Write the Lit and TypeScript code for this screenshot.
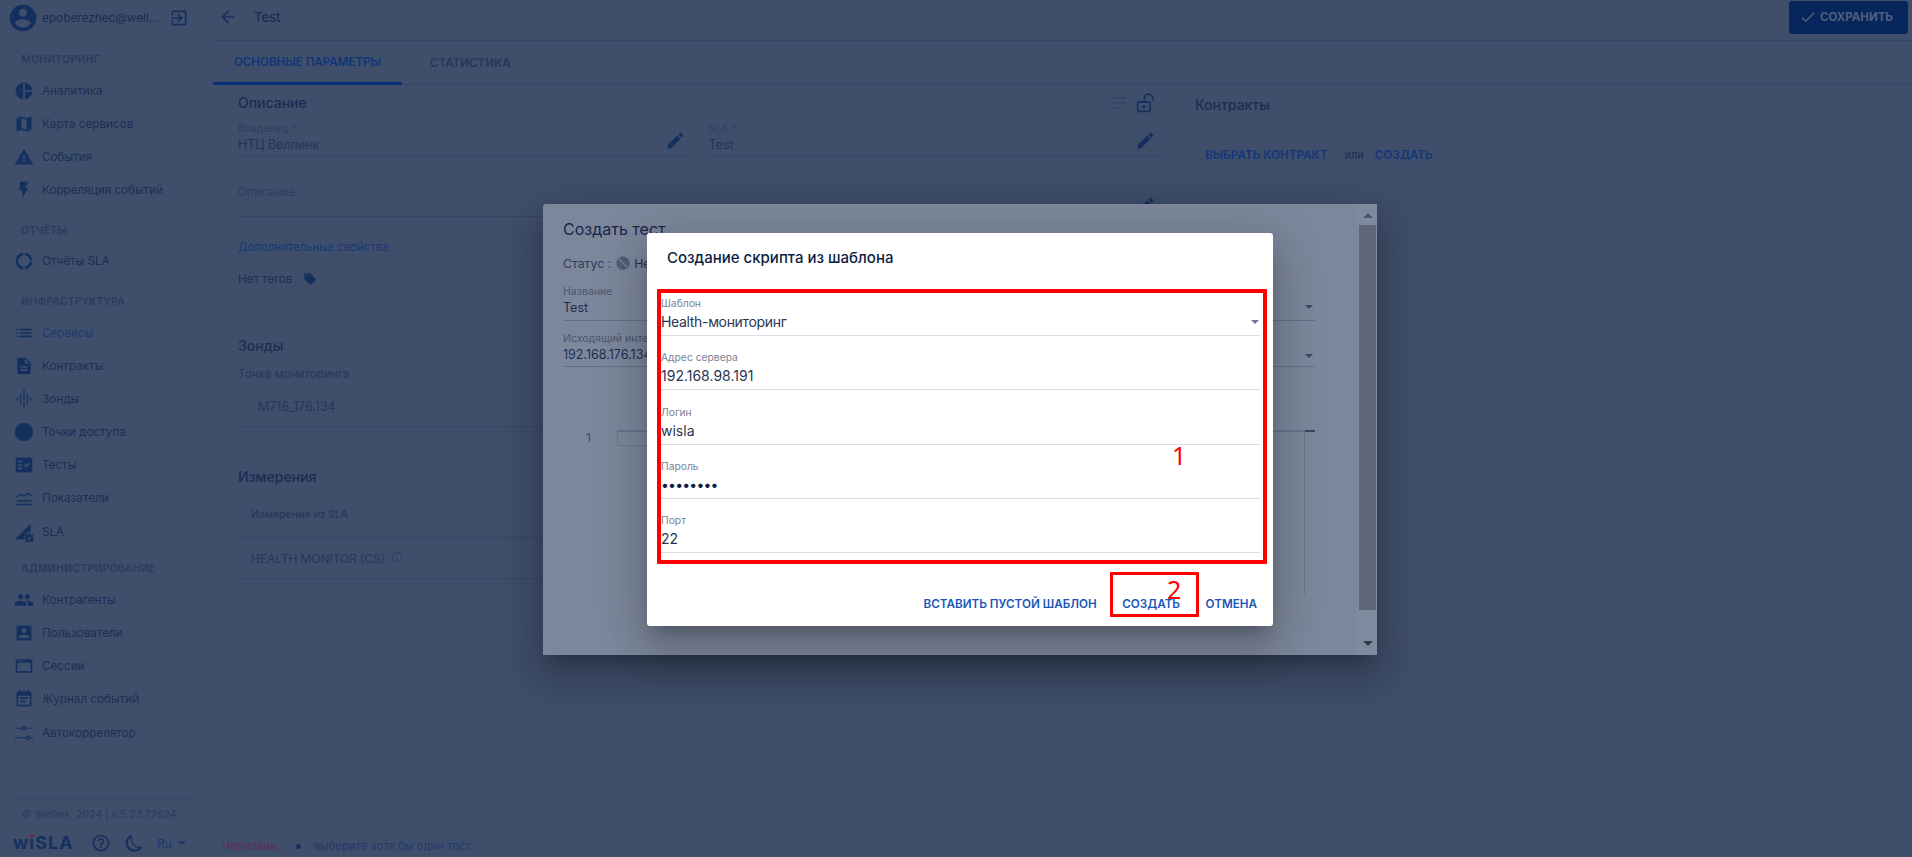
import { LitElement, html, css, svg } from "lit";
import { customElement } from "lit/decorators.js";

const P: Record<string, string> = {
  account: "M12 2C6.48 2 2 6.48 2 12s4.48 10 10 10 10-4.48 10-10S17.52 2 12 2zm0 3c1.66 0 3 1.34 3 3s-1.34 3-3 3-3-1.34-3-3 1.34-3 3-3zm0 14.2c-2.5 0-4.71-1.28-6-3.22.03-1.99 4-3.08 6-3.08 1.99 0 5.97 1.09 6 3.08-1.29 1.94-3.5 3.22-6 3.22z",
  exit: "M10.09 15.59L11.5 17l5-5-5-5-1.41 1.41L12.67 11H3v2h9.67l-2.58 2.59zM19 3H5c-1.11 0-2 .9-2 2v4h2V5h14v14H5v-4H3v4c0 1.1.89 2 2 2h14c1.1 0 2-.9 2-2V5c0-1.1-.9-2-2-2z",
  pie: "M11 2v20c-5.07-.5-9-4.79-9-10s3.93-9.5 9-10zm2.03 0v8.99H22c-.47-4.74-4.24-8.52-8.97-8.99zm0 11.01V22c4.74-.47 8.5-4.25 8.97-8.99h-8.97z",
  map: "M20.5 3l-.16.03L15 5.1 9 3 3.36 4.9c-.21.07-.36.25-.36.48V20.5c0 .28.22.5.5.5l.16-.03L9 18.9l6 2.1 5.64-1.9c.21-.07.36-.25.36-.48V3.5c0-.28-.22-.5-.5-.5zM15 19l-6-2.11V5l6 2.11V19z",
  warning: "M1 21h22L12 2 1 21zm12-3h-2v-2h2v2zm0-4h-2v-4h2v4z",
  flash: "M7 2v11h3v9l7-12h-4l4-8z",
  donut: "M11 5.08V2c-5 .5-9 4.81-9 10s4 9.5 9 10v-3.08c-3-.48-6-3.49-6-6.92s3-6.44 6-6.92zM18.97 11H22c-.47-5-4-8.53-9-9v3.08C16 5.51 18.54 8 18.97 11zM13 18.92V22c5-.47 8.53-4 9-9h-3.03c-.43 3-2.97 5.49-5.97 5.92z",
  list: "M3 13h2v-2H3v2zm0 4h2v-2H3v2zm0-8h2V7H3v2zm4 4h14v-2H7v2zm0 4h14v-2H7v2zM7 7v2h14V7H7z",
  doc: "M14 2H6c-1.1 0-1.99.9-1.99 2L4 20c0 1.1.89 2 1.99 2H18c1.1 0 2-.9 2-2V8l-6-6zm2 16H8v-2h8v2zm0-4H8v-2h8v2zm-3-5V3.5L18.5 9H13z",
  eq: "M11.3 1h1.4v22h-1.4zM7.3 5h1.4v14H7.3zM15.3 5h1.4v14h-1.4zM3.3 10h1.4v4H3.3zM19.3 10h1.4v4h-1.4z",
  dot: "M12 1a11 11 0 1 0 0 22 11 11 0 0 0 0-22z",
  check: "M20 3H4c-1.1 0-2 .9-2 2v14c0 1.1.9 2 2 2h16c1.1 0 2-.9 2-2V5c0-1.1-.9-2-2-2zM10 17H5v-2h5v2zm0-4H5v-2h5v2zm0-4H5V7h5v2zm4.82 6L12 12.16l1.41-1.41 1.41 1.42L17.99 9l1.42 1.42L14.82 15z",
  metrics: "M3 19h18v1.6H3zM3 14.5h18v1.6H3zM3 10.5l5-4 4 2.4 5-3.4 4 2.4v1.9l-4-2.4-5 3.4-4-2.4-5 4z",
  sla: "M1 21L20 2v10.2a6 6 0 0 0-6.6 8.8zM19 13.5l.4 1.6 1.3.5 1.4-.8 1 1-.8 1.4.5 1.3 1.6.4v1.4l-1.6.4-.5 1.3.8 1.4-1 1-1.4-.8-1.3.5-.4 1.6h-1.4l-.4-1.6-1.3-.5-1.4.8-1-1 .8-1.4-.5-1.3-1.6-.4v-1.4l1.6-.4.5-1.3-.8-1.4 1-1 1.4.8 1.3-.5.4-1.6zM18.3 18a1.7 1.7 0 1 0 0 3.4 1.7 1.7 0 0 0 0-3.4z",
  people: "M16 11c1.66 0 2.99-1.34 2.99-3S17.66 5 16 5c-1.66 0-3 1.34-3 3s1.34 3 3 3zm-8 0c1.66 0 2.99-1.34 2.99-3S9.66 5 8 5C6.34 5 5 6.34 5 8s1.34 3 3 3zm0 2c-2.33 0-7 1.17-7 3.5V19h14v-2.5c0-2.33-4.67-3.5-7-3.5zm8 0c-.29 0-.62.02-.97.05 1.16.84 1.97 1.97 1.97 3.45V19h6v-2.5c0-2.33-4.67-3.5-7-3.5z",
  box: "M3 5v14c0 1.1.89 2 2 2h14c1.1 0 2-.9 2-2V5c0-1.1-.9-2-2-2H5c-1.11 0-2 .9-2 2zm12 4c0 1.66-1.34 3-3 3s-3-1.34-3-3 1.34-3 3-3 3 1.34 3 3zm-9 8c0-2 4-3.1 6-3.1s6 1.1 6 3.1v1H6v-1z",
  web: "M20 4H4c-1.11 0-2 .9-2 2v12c0 1.1.89 2 2 2h16c1.1 0 2-.9 2-2V6c0-1.1-.89-2-2-2zm0 14H4V8h16v10zM4.5 5.2h1.2v1.2H4.5zM7 5.2h1.2v1.2H7zM9.5 5.2h1.2v1.2H9.5z",
  note: "M17 10H7v2h10v-2zm2-7h-1V1h-2v2H8V1H6v2H5c-1.11 0-1.99.9-1.99 2L3 19c0 1.1.89 2 2 2h14c1.1 0 2-.9 2-2V5c0-1.1-.9-2-2-2zm0 16H5V8h14v11zm-5-5H7v2h7v-2z",
  tune: "M1 7h8.2a3 3 0 0 0 5.6 0H23V5.6h-8.2a3 3 0 0 0-5.6 0H1zM12 5a1.3 1.3 0 1 1 0 2.6A1.3 1.3 0 0 1 12 5zM1 18.4h13.2a3 3 0 0 0 5.6 0H23V17h-3.2a3 3 0 0 0-5.6 0H1zM17 16.4a1.3 1.3 0 1 1 0 2.6 1.3 1.3 0 0 1 0-2.6z",
  help: "M11 18h2v-2h-2v2zm1-16C6.48 2 2 6.48 2 12s4.48 10 10 10 10-4.48 10-10S17.52 2 12 2zm0 18c-4.41 0-8-3.59-8-8s3.59-8 8-8 8 3.59 8 8-3.59 8-8 8zm0-14c-2.21 0-4 1.79-4 4h2c0-1.1.9-2 2-2s2 .9 2 2c0 2-3 1.75-3 5h2c0-2.25 3-2.5 3-5 0-2.21-1.79-4-4-4z",
  moon: "M9.5 2A10.5 10.5 0 1 0 22 16.3a12 12 0 0 1-3 .4C12.8 16.7 8.4 11.6 9.5 2zM7.6 5a14 14 0 0 0 10 13.7A8.5 8.5 0 0 1 7.6 5z",
  edit: "M3 17.25V21h3.75L17.81 9.94l-3.75-3.75L3 17.25zM20.71 7.04c.39-.39.39-1.02 0-1.41l-2.34-2.34c-.39-.39-1.02-.39-1.41 0l-1.83 1.83 3.75 3.75 1.83-1.83z",
  back: "M20 11H7.83l5.59-5.59L12 4l-8 8 8 8 1.41-1.41L7.83 13H20v-2z",
  tick: "M9 16.17L4.83 12l-1.42 1.41L9 19 21 7l-1.41-1.41z",
  tag: "M21.41 11.58l-9-9C12.05 2.22 11.55 2 11 2H4c-1.1 0-2 .9-2 2v7c0 .55.22 1.05.59 1.42l9 9c.36.36.86.58 1.41.58.55 0 1.05-.22 1.41-.59l7-7c.37-.36.59-.86.59-1.41 0-.55-.23-1.06-.59-1.42zM5.5 7C4.67 7 4 6.33 4 5.5S4.67 4 5.5 4 7 4.67 7 5.5 6.33 7 5.5 7z",
  lock: "M3 10h13a2 2 0 0 1 2 2v9a2 2 0 0 1-2 2H3a2 2 0 0 1-2-2v-9a2 2 0 0 1 2-2zm0 2v9h13v-9zm6.5 2.5a2 2 0 1 1 0 4 2 2 0 0 1 0-4zM9 10V6.5a6 6 0 0 1 12 0V9h-2V6.5a4 4 0 0 0-8 0V10z",
  sort: "M2 5h20v1.3H2zM2 11.3h20v1.3H2zM2 17.6h13v1.3H2z",
  info: "M11.3 7h1.4v1.4h-1.4zM11.3 10h1.4v7h-1.4zM12 2a10 10 0 1 0 0 20 10 10 0 0 0 0-20zm0 18.7a8.7 8.7 0 1 1 0-17.4 8.7 8.7 0 0 1 0 17.4z",
  offline: "M12 2a10 10 0 1 0 0 20 10 10 0 0 0 0-20zM3.5 5l1.3-1.3 15.5 15.5L19 20.5z",
};

const icon = (n: string, size = 24) => html`<svg class="ico" width=${size} height=${size} viewBox="0 0 24 24" fill="currentColor">${svg`<path fill-rule="evenodd" d=${P[n]}></path>`}</svg>`;

const NAV = [
  { title: "МОНИТОРИНГ", cls: "", items: [["pie", "Аналитика"], ["map", "Карта сервисов"], ["warning", "События"], ["flash", "Корреляция событий"]] },
  { title: "ОТЧЁТЫ", cls: "", items: [["donut", "Отчёты SLA"]] },
  { title: "ИНФРАСТРУКТУРА", cls: "", items: [["list", "Сервисы"], ["doc", "Контракты"], ["eq", "Зонды"], ["dot", "Точки доступа"], ["check", "Тесты"], ["metrics", "Показатели"], ["sla", "SLA"]] },
  { title: "АДМИНИСТРИРОВАНИЕ", cls: "tight", items: [["people", "Контрагенты"], ["box", "Пользователи"], ["web", "Сессии"], ["note", "Журнал событий"], ["tune", "Автокоррелятор"]] },
];

const TPL = [
  ["Шаблон", "Health-мониторинг", "select"],
  ["Адрес сервера", "192.168.98.191", ""],
  ["Логин", "wisla", ""],
  ["Пароль", "••••••••", "pw"],
  ["Порт", "22", ""],
];

@customElement("app-root")
export class AppRoot extends LitElement {
  static styles = css`
    :host { display: block; position: relative; width: 1912px; height: 857px; overflow: hidden; background: #3f4e6a; font-family: Inter, "Noto Sans", sans-serif; color: #1e2f55; }
    * { box-sizing: border-box; }
    .ico { display: block; flex: none; }
    .app { display: grid; grid-template-columns: 213px 1fr; height: 857px; }

    .side { display: flex; flex-direction: column; height: 857px; }
    .profile { height: 45px; display: flex; align-items: center; padding: 0 0 10px 7px; font-size: 11.8px; color: #1a2d54; }
    .profile .av { color: #14305f; margin-right: 3px; }
    .profile .mail { width: 127px; white-space: nowrap; }
    .profile .out { color: #14305f; }
    .group { margin-bottom: 9px; }
    .group.tight { margin-top: -2px; }
    .group.tight h4 { height: 28px; line-height: 28px; }
    .group h4 { margin: 0; height: 29px; line-height: 29px; padding-left: 21px; font-size: 10.5px; font-weight: 600; color: #2a3b60; letter-spacing: 0.2px; }
    .item { height: 33.2px; display: flex; align-items: center; padding-left: 14px; font-size: 11.7px; color: #1e2f55; }
    .item .ico { color: #14305f; margin-right: 8px; }
    .item.sub { color: #1d3a70; }
    .foot { margin-top: auto; }
    .copy { margin: 0 15px 0 13px; border-top: 1px solid #374664; height: 31px; padding: 9px 0 0 9px; font-size: 10.5px; color: #2a3b5f; white-space: nowrap; }
    .brand { height: 28px; display: flex; align-items: center; padding: 0 0 0 13px; color: #15305f; }
    .logo { position: relative; width: 60px; font-size: 18px; font-weight: 700; letter-spacing: 1px; line-height: 24px; color: #14305f; }
    .logo i { position: absolute; left: 17px; top: 3px; width: 3.5px; height: 3.5px; border-radius: 50%; background: #6a2a4c; }
    .brand .q { margin-left: 18px; }
    .brand .m { margin-left: 13px; }
    .brand .ru { margin-left: 13px; font-size: 12px; color: #1d3a70; }
    .caret { width: 0; height: 0; border-left: 5px solid transparent; border-right: 5px solid transparent; border-top: 5px solid currentColor; }
    .brand .caret { margin-left: 6px; border-width: 4px 4px 0; color: #1d3a70; }

    .main { display: flex; flex-direction: column; min-width: 0; }
    .top { height: 41px; border-bottom: 1px solid #374664; display: flex; align-items: center; padding: 0 4px 6px 5px; }
    .top .ar { color: #1a3060; margin-right: 16px; }
    .top b { font-size: 13px; font-weight: 500; color: #1a2d54; }
    .save { margin-left: auto; height: 33px; width: 119px; border-radius: 3px; background: #07265c; color: #4f5f7e; display: flex; align-items: center; padding-left: 10px; gap: 3px; font-size: 11.5px; font-weight: 700; }
    .tabs { height: 44px; border-bottom: 1px solid #374664; display: flex; font-size: 11.6px; font-weight: 600; }
    .tab { display: flex; align-items: center; justify-content: center; height: 44px; color: #25375d; }
    .tab.on { width: 189px; color: #10367a; border-bottom: 3px solid #0a3078; padding-top: 1px; }
    .tab.off { margin-left: 28px; }
    .body { display: grid; grid-template-columns: 923px 1fr; padding-left: 25px; column-gap: 34px; }
    .titlebar { height: 35px; display: flex; align-items: center; justify-content: space-between; font-size: 14px; font-weight: 500; color: #1a2d54; }
    .titlebar .acts { display: flex; align-items: center; gap: 8.5px; padding-right: 5px; }
    .titlebar .acts .s { color: #2e3f60; }
    .titlebar .acts .l { color: #14305f; }
    .cols { display: grid; grid-template-columns: 1fr 1fr; column-gap: 18px; }
    .f { position: relative; border-bottom: 1px solid #374664; height: 37px; }
    .f label { display: block; font-size: 10.5px; line-height: 14px; padding-top: 2px; height: 16px; color: #2f3e5f; }
    .f div { font-size: 12.5px; line-height: 17px; color: #24345a; }
    .f .ico { position: absolute; right: 5px; top: 10px; color: #14305f; }
    .f.desc { height: 60px; padding-top: 28px; font-size: 11.8px; color: #2f3e5f; margin-bottom: 21px; }
    .f.desc .ico { top: 38px; }
    .link { font-size: 11.4px; color: #163a78; line-height: 18px; }
    .tags { margin-top: 14px; height: 18px; display: flex; align-items: center; font-size: 11.6px; color: #1f3055; }
    .tags .ico { margin-left: 11px; color: #14305f; }
    .h2 { font-size: 14px; font-weight: 500; color: #1a2d54; }
    .probes { margin-top: 49px; line-height: 18px; }
    .mp { margin-top: 10px; font-size: 11.7px; line-height: 18px; color: #26375c; }
    .point { margin-top: 15px; height: 29px; padding: 0 0 0 20px; font-size: 12.5px; line-height: 18px; color: #26375c; border-bottom: 1px solid #374664; }
    .meas { margin-top: 40px; line-height: 20px; }
    .th { margin-top: 21px; height: 30px; padding-left: 13px; font-size: 10.5px; font-weight: 600; color: #2a3a5e; border-bottom: 1px solid #374664; }
    .td { height: 41px; padding: 13px 0 0 13px; display: flex; align-items: flex-start; gap: 6px; font-size: 11.9px; color: #25375c; border-bottom: 1px solid #374664; }
    .td .ico { color: #2a3a60; }
    .right .titlebar { height: 39px; }
    .right .row { display: flex; align-items: center; margin-top: 24px; padding-left: 10px; font-size: 11.7px; font-weight: 600; color: #14377a; }
    .right .or { margin: 0 11px 0 17px; font-weight: 400; font-size: 11px; color: #1a2d54; }
    .draft { margin-top: auto; height: 30px; border-top: 1px solid #3a4966; padding: 9px 0 0 9px; display: flex; align-items: flex-start; font-size: 11.4px; color: #233a6a; line-height: 18px; }
    .draft em { font-style: normal; color: #5e2f55; }
    .draft .b { width: 5px; height: 5px; border-radius: 50%; background: #15305f; margin: 7px 13px 0 16px; }

    .d1 { position: absolute; left: 543px; top: 204px; width: 834px; height: 451px; background: #7c879b; border-radius: 3px 0 0 0; display: flex; box-shadow: 0 11px 15px -7px rgba(0,0,0,.2), 0 24px 38px 3px rgba(0,0,0,.14), 0 9px 46px 8px rgba(0,0,0,.12); }
    .d1 .c { flex: 1; padding: 0 0 0 20px; color: #1c2d4f; min-width: 0; }
    .d1 h3 { margin: 0; font-size: 16px; font-weight: 400; line-height: 20px; padding-top: 15px; height: 46px; color: #16274a; }
    .st { display: flex; align-items: center; height: 18px; margin-top: 4px; font-size: 12.3px; color: #2d3c5b; }
    .st .ico { margin: 0 3px 0 4px; color: #515d74; }
    .st span:last-child { color: #3a2a4a; }
    .dcols { display: grid; grid-template-columns: 370px 365px; column-gap: 17px; row-gap: 11px; margin-top: 13px; }
    .df { height: 35.5px; border-bottom: 1px solid #657087; position: relative; font-size: 12.5px; line-height: 17px; color: #202f4f; }
    .df label { display: block; font-size: 10.5px; line-height: 14px; height: 14px; color: #4a5670; white-space: nowrap; }
    .df .caret { position: absolute; right: 2px; top: 20px; border-width: 4px 4px 0; color: #3d4860; }
    .df:nth-child(4) .caret { top: 22px; }
    .editor { position: relative; margin-top: 63px; height: 164px; display: flex; }
    .editor .n { width: 54px; padding-left: 23px; font-size: 12px; color: #28597f; line-height: 15px; }
    .editor .b { width: 60px; height: 16px; border: 1px solid #6c778b; }
    .editor .hl { position: absolute; left: 54px; width: 687px; top: 0; height: 2px; background: #66748f; }
    .editor .v { position: absolute; left: 741px; top: 0; bottom: 0; width: 1px; background: #687387; }
    .editor .d { position: absolute; left: 742px; top: 0; width: 10px; height: 2px; background: #3a445a; }
    .sb { width: 20px; padding: 0 1px 0 2px; background: #7f8a9e; display: flex; flex-direction: column; align-items: center; }
    .sb .up, .sb .dn { width: 0; height: 0; border-left: 5px solid transparent; border-right: 5px solid transparent; }
    .sb .up { border-bottom: 5px solid #4e586c; margin: 9px 0 7px; }
    .sb .th2 { width: 17px; height: 385px; background: #5d6779; }
    .sb .dn { border-top: 5px solid #323b4d; margin-top: 31px; }

    .d2 { position: absolute; left: 647px; top: 233px; width: 626px; height: 393px; background: #fff; border-radius: 3px; display: flex; flex-direction: column; box-shadow: 0 11px 15px -7px rgba(0,0,0,.2), 0 24px 38px 3px rgba(0,0,0,.14), 0 9px 46px 8px rgba(0,0,0,.12); }
    .d2 h2 { margin: 0; height: 50px; padding: 15px 0 0 20px; font-size: 15px; font-weight: 500; line-height: 20px; color: #0c1e42; }
    .d2 .form { padding: 13px 13px 0 14px; }
    .tf { position: relative; height: 40px; border-bottom: 1px solid #dcdee3; margin-bottom: 14.3px; }
    .tf label { display: block; height: 16px; font-size: 10.3px; line-height: 14px; color: #7a849a; }
    .tf div { font-size: 14px; line-height: 20px; color: #2a3552; }
    .tf.select div { letter-spacing: -0.33px; }
    .tf.pw div { letter-spacing: -0.8px; color: #0c1e42; }
    .tf .caret { position: absolute; right: 1px; top: 24px; border-width: 4px 4px 0; color: #6c7690; }
    .acts2 { margin-top: auto; display: flex; justify-content: flex-end; gap: 9.5px; padding: 4px 8px; }
    .btn { height: 36px; padding: 0 8px; display: flex; align-items: center; font-size: 11.7px; font-weight: 600; color: #1a56b8; white-space: nowrap; }

    .mark { position: absolute; border: 4px solid #fe0000; border-radius: 1px; }
    .m1 { left: 657px; top: 289px; width: 610px; height: 275px; }
    .m2 { left: 1110px; top: 572px; width: 89px; height: 45px; border-width: 3.5px; }
    .num { position: absolute; color: #fe0000; font-family: "Noto Sans", sans-serif; font-size: 25px; line-height: 30px; }
    .n1 { left: 1172px; top: 440px; }
    .n2 { left: 1167px; top: 574px; }
  `;

  render() {
    return html`
      <div class="app">
        <aside class="side">
          <div class="profile">
            <span class="av">${icon("account", 32)}</span>
            <span class="mail">epoberezhec@well...</span>
            <span class="out">${icon("exit", 20)}</span>
          </div>
          ${NAV.map((g) => html`
            <section class="group ${g.cls}">
              <h4>${g.title}</h4>
              ${g.items.map(([i, t]) => html`<div class="item ${t === "Сервисы" ? "sub" : ""}">${icon(i, 20)}<span>${t}</span></div>`)}
            </section>`)}
          <div class="foot">
            <div class="copy">© Wellink, 2024 | v.5.2.1.72624</div>
            <div class="brand">
              <span class="logo">wıSLA<i></i></span>
              <span class="q">${icon("help", 20)}</span>
              <span class="m">${icon("moon", 20)}</span>
              <span class="ru">Ru</span><span class="caret"></span>
            </div>
          </div>
        </aside>

        <main class="main">
          <header class="top">
            <span class="ar">${icon("back", 20)}</span>
            <b>Test</b>
            <div class="save">${icon("tick", 18)}<span>СОХРАНИТЬ</span></div>
          </header>
          <nav class="tabs">
            <div class="tab on">ОСНОВНЫЕ ПАРАМЕТРЫ</div>
            <div class="tab off">СТАТИСТИКА</div>
          </nav>
          <div class="body">
            <div>
              <div class="titlebar">
                <span>Описание</span>
                <span class="acts"><span class="s">${icon("sort", 18)}</span><span class="l">${icon("lock", 20)}</span></span>
              </div>
              <div class="cols">
                <div class="f"><label>Владелец *</label><div>НТЦ Веллинк</div>${icon("edit", 21)}</div>
                <div class="f"><label>SLA *</label><div>Test</div>${icon("edit", 21)}</div>
              </div>
              <div class="f desc">Описание ${icon("edit", 21)}</div>
              <div class="link">Дополнительные свойства</div>
              <div class="tags">Нет тегов ${icon("tag", 14)}</div>
              <div class="h2 probes">Зонды</div>
              <div class="mp">Точка мониторинга</div>
              <div class="point">M716_176.134</div>
              <div class="h2 meas">Измерения</div>
              <div class="th">Измерение из SLA</div>
              <div class="td">HEALTH MONITOR (CS) ${icon("info", 12)}</div>
            </div>
            <div class="right">
              <div class="titlebar"><span>Контракты</span></div>
              <div class="row"><span>ВЫБРАТЬ КОНТРАКТ</span><span class="or">или</span><span>СОЗДАТЬ</span></div>
            </div>
          </div>
          <div class="draft"><em>Черновик:</em><span class="b"></span><span>выберите хотя бы один тест</span></div>
        </main>
      </div>

      <div class="d1">
        <div class="c">
          <h3>Создать тест</h3>
          <div class="st"><span>Статус :</span>${icon("offline", 16)}<span>Не активен</span></div>
          <div class="dcols">
            <div class="df"><label>Название</label>Test</div>
            <div class="df"><label>Тип</label><span class="caret"></span></div>
            <div class="df"><label>Исходящий интерфейс</label>192.168.176.134</div>
            <div class="df"><label>Адрес</label><span class="caret"></span></div>
          </div>
          <div class="editor">
            <div class="n">1</div><div class="b"></div>
            <span class="hl"></span><span class="v"></span><span class="d"></span>
          </div>
        </div>
        <div class="sb"><span class="up"></span><span class="th2"></span><span class="dn"></span></div>
      </div>

      <div class="d2">
        <h2>Создание скрипта из шаблона</h2>
        <div class="form">
          ${TPL.map(([l, v, k]) => html`
            <div class="tf ${k}"><label>${l}</label><div>${v}</div>${k === "select" ? html`<span class="caret"></span>` : ""}</div>`)}
        </div>
        <div class="acts2">
          <div class="btn">ВСТАВИТЬ ПУСТОЙ ШАБЛОН</div>
          <div class="btn">СОЗДАТЬ</div>
          <div class="btn">ОТМЕНА</div>
        </div>
      </div>

      <span class="mark m1"></span>
      <span class="mark m2"></span>
      <span class="num n1">1</span>
      <span class="num n2">2</span>
    `;
  }
}
